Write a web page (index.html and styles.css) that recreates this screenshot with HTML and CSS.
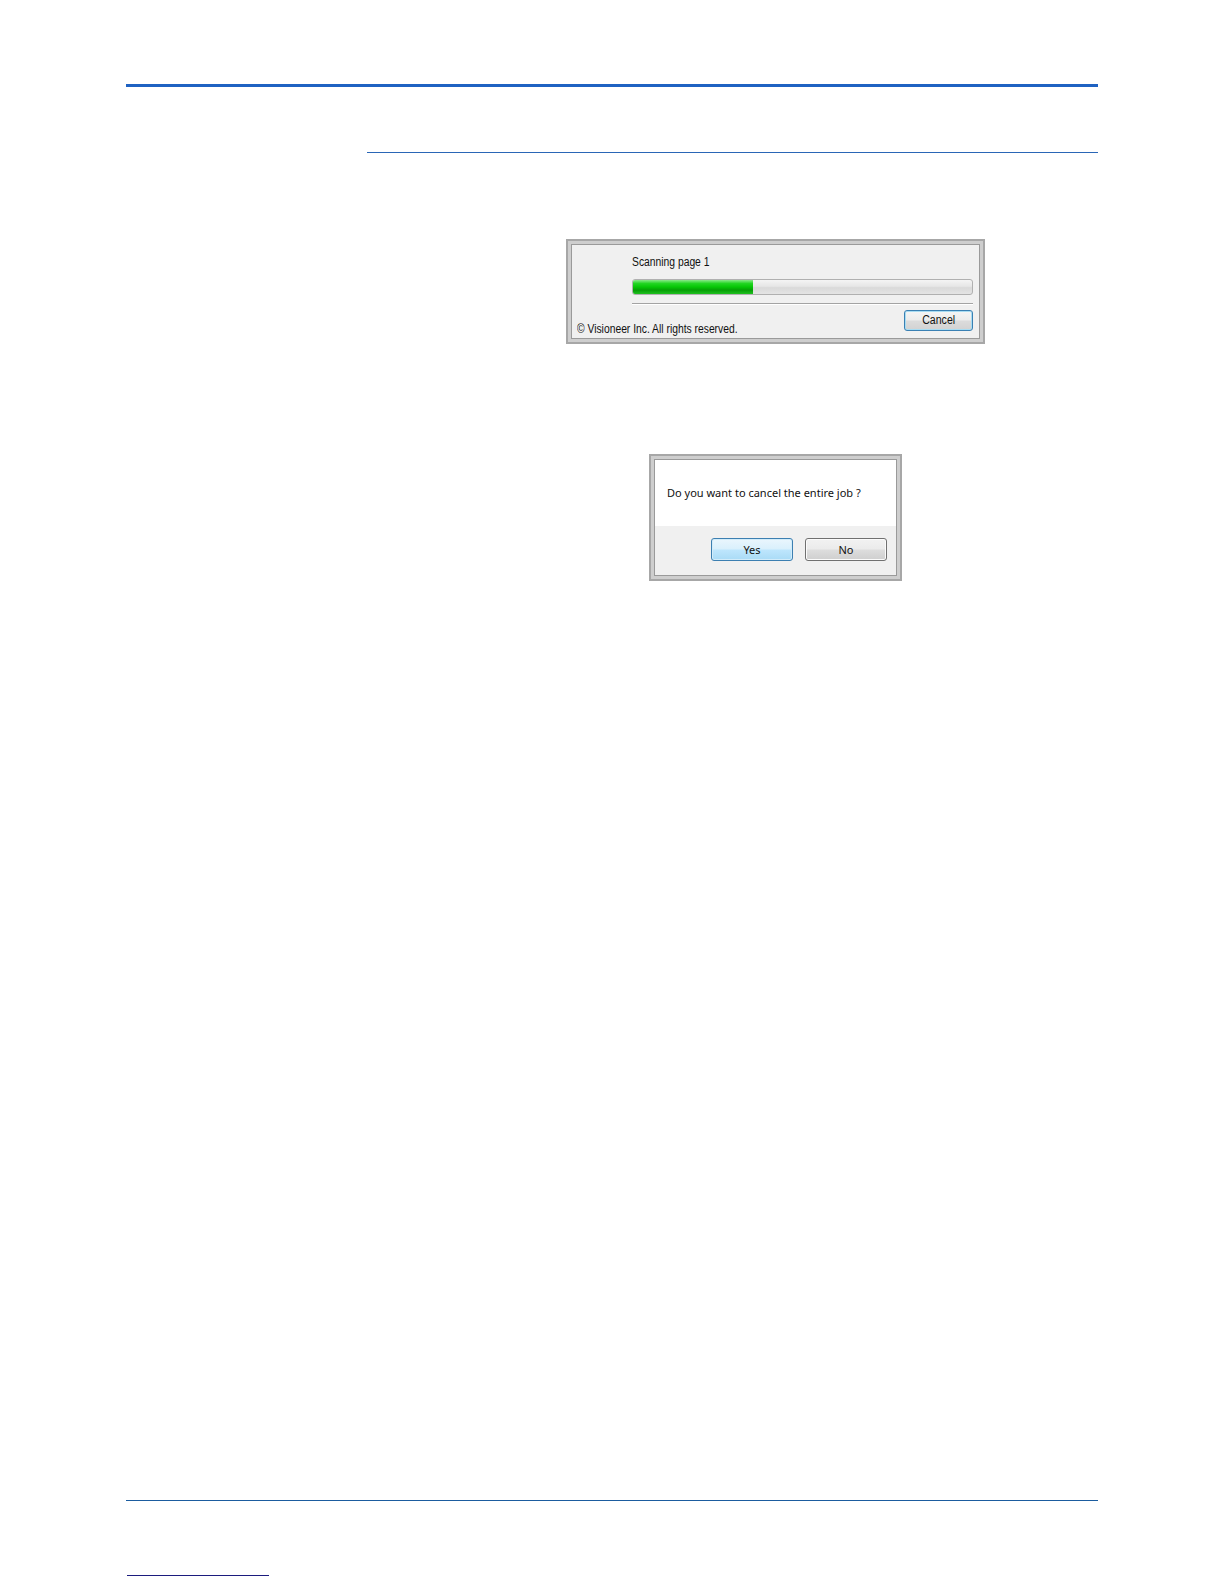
FILE: index.html
```html
<!DOCTYPE html>
<html lang="en">
<head>
<meta charset="utf-8">
<title>Scanning</title>
<link rel="stylesheet" href="styles.css">
</head>
<body>
<div class="page">
  <div class="rule-top"></div>
  <div class="rule-section"></div>

  <div class="frame fig-progress">
    <div class="dlg dlg-progress">
      <div class="scan-block">
        <div class="scan-label"><span class="narrow">Scanning page 1</span></div>
        <div class="progress"><div class="progress-fill" style="width: 35.5%"></div></div>
        <div class="separator"></div>
      </div>
      <div class="bottom-row">
        <div class="copyright"><span class="narrow">© Visioneer Inc. All rights reserved.</span></div>
        <button class="btn btn-cancel" type="button"><span class="narrow narrow-center">Cancel</span></button>
      </div>
    </div>
  </div>

  <div class="frame fig-confirm">
    <div class="dlg dlg-confirm">
      <div class="msg-area">
        <div class="msg">Do you want to cancel the entire job ?</div>
      </div>
      <div class="msg-footer">
        <button class="btn btn-yes" type="button">Yes</button>
        <button class="btn btn-no" type="button">No</button>
      </div>
    </div>
  </div>

  <div class="rule-footer"></div>
  <div class="link-line"></div>
</div>
</body>
</html>
```

FILE: styles.css
```css
* { box-sizing: border-box; }

html, body {
  margin: 0;
  padding: 0;
  background: #ffffff;
}

.page {
  width: 1224px;
  height: 1584px;
  overflow: hidden;
  display: flow-root;
  font-family: "Liberation Sans", Arial, sans-serif;
}

.rule-top {
  margin: 84px 126px 0 126px;
  height: 3px;
  background: #1f62c2;
}

.rule-section {
  margin: 65px 126px 0 367px;
  height: 1px;
  background: #2a66b6;
}

/* screenshot frame around the dialogs */
.frame {
  border: 2px solid #a7a7a7;
  padding: 3px;
  background: #cecece;
}

.dlg {
  border: 1px solid #9a9a9a;
  height: 100%;
}

.narrow {
  display: inline-block;
  white-space: nowrap;
  transform: scaleX(0.86);
  transform-origin: left center;
}

.narrow-center {
  transform: scaleX(0.88);
  transform-origin: center center;
}

/* progress dialog */
.fig-progress {
  margin: 86px 0 0 566px;
  width: 419px;
  height: 105px;
}

.dlg-progress {
  background: #f0f0f0;
  padding: 10px 6px 0 0;
  font-size: 12px;
  color: #111;
}

.scan-block {
  margin-left: 60px;
}

.scan-label {
  line-height: 14px;
  height: 14px;
}

.progress {
  margin-top: 10px;
  height: 16px;
  border: 1px solid #b0b0b0;
  border-radius: 3px;
  background: linear-gradient(to bottom, #f4f4f4 0%, #e6e6e6 45%, #d9d9d9 55%, #e4e4e4 100%);
  overflow: hidden;
}

.progress-fill {
  height: 100%;
  background: linear-gradient(to bottom, #8ae88a 0%, #22d522 25%, #06c606 50%, #069e06 72%, #1fc11f 100%);
}

.separator {
  margin-top: 8px;
  height: 2px;
  border-top: 1px solid #a3a3a3;
  border-bottom: 1px solid #ffffff;
}

.bottom-row {
  margin: 5px 0 0 5px;
  display: flex;
  justify-content: space-between;
  align-items: flex-end;
}

.copyright {
  line-height: 14px;
  white-space: nowrap;
}

.btn {
  margin: 0;
  padding: 0;
  font: inherit;
  color: #111;
  border-radius: 3px;
  text-align: center;
}

.btn-cancel {
  width: 69px;
  height: 21px;
  margin-bottom: 5px;
  border: 1px solid #3a80b3;
  background: linear-gradient(to bottom, #f5f5f5 0%, #ececec 48%, #dcdcdc 52%, #d2d2d2 100%);
  box-shadow: inset 0 0 0 1px #a8dcf2;
  line-height: 19px;
}

/* confirm dialog */
.fig-confirm {
  margin: 110px 0 0 649px;
  width: 253px;
  height: 127px;
}

.dlg-confirm {
  display: flex;
  flex-direction: column;
  font-family: "Noto Sans", "Liberation Sans", sans-serif;
  font-size: 11px;
  color: #111;
}

.msg-area {
  height: 66px;
  background: #ffffff;
  padding: 25px 0 0 12px;
}

.msg {
  line-height: 15px;
  white-space: nowrap;
}

.msg-footer {
  flex: 1;
  background: #f0f0f0;
  display: flex;
  justify-content: flex-end;
  align-items: flex-start;
  gap: 12px;
  padding: 12px 9px 0 0;
}

.btn-yes,
.btn-no {
  width: 82px;
  height: 23px;
  line-height: 21px;
}

.btn-yes {
  border: 1px solid #3c7fb1;
  background: linear-gradient(to bottom, #eaf6fd 0%, #d9f0fc 48%, #bee6fd 52%, #a9dbf6 100%);
  box-shadow: inset 0 0 0 1px #d2ecfa;
}

.btn-no {
  border: 1px solid #707070;
  background: linear-gradient(to bottom, #f2f2f2 0%, #ebebeb 48%, #dddddd 52%, #cfcfcf 100%);
  box-shadow: inset 0 0 0 1px #fbfbfb;
}

.rule-footer {
  margin: 919px 126px 0 126px;
  height: 1px;
  background: #1b5c9f;
}

.link-line {
  margin: 74px 0 0 127px;
  width: 142px;
  height: 1px;
  background: #1c1c7e;
}
```
